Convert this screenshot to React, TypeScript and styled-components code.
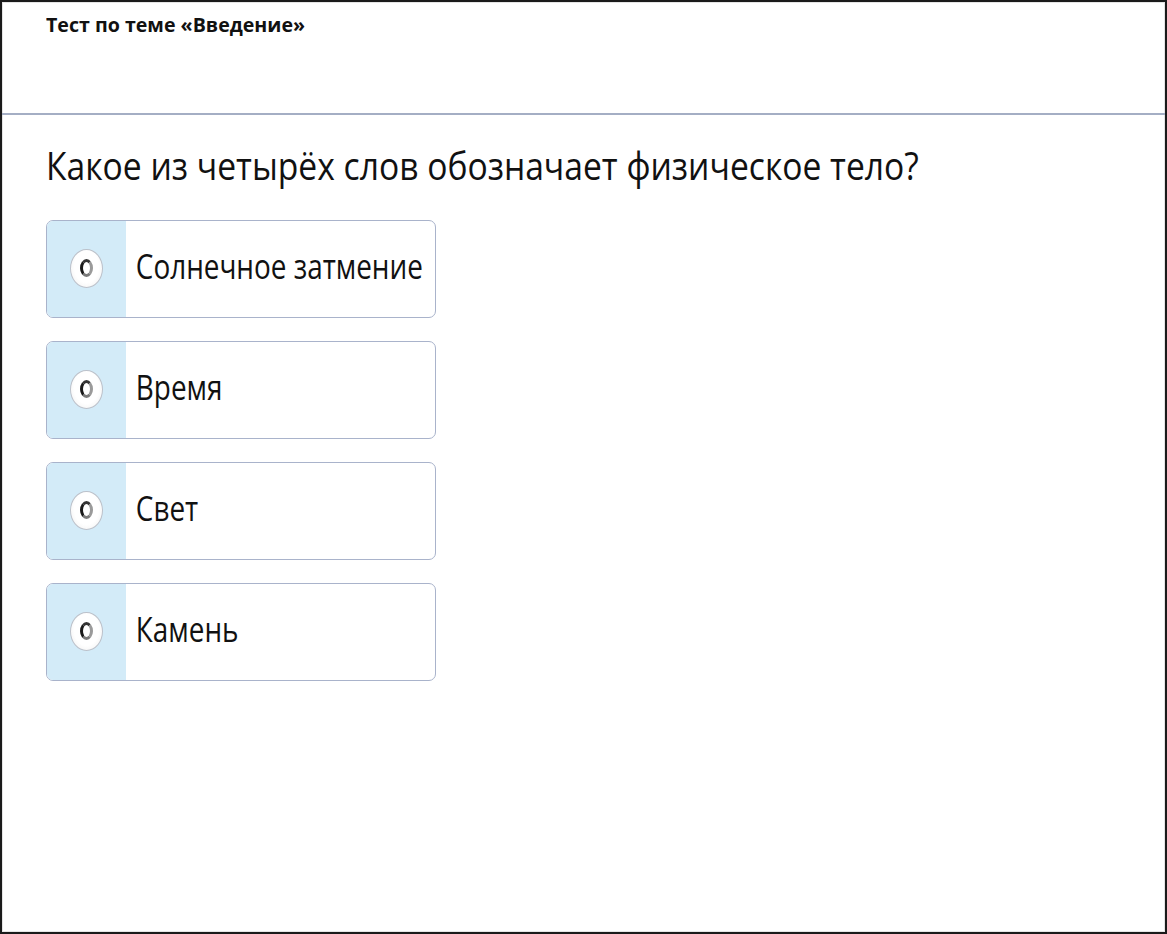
import React from 'react';
import styled, { createGlobalStyle } from 'styled-components';

const GlobalStyle = createGlobalStyle`
    html, body {
        margin: 0;
        padding: 0;
        background: #ffffff;
    }
    body {
        font-family: 'Open Sans', 'Noto Sans', sans-serif;
        color: #111111;
    }
`;

const options = ['Солнечное затмение', 'Время', 'Свет', 'Камень'];

const Frame = styled.div`
    box-sizing: border-box;
    width: 1167px;
    height: 934px;
    border: 2px solid #1a1a1a;
    box-shadow: inset 0 0 0 1px #e4e4e4;
    display: flex;
    flex-direction: column;
    overflow: hidden;
`;

const Header = styled.header`
    height: 113px;
    border-bottom: 2px solid #a4aec4;
    padding: 9px 0 0 44px;
    box-sizing: border-box;
`;

const Title = styled.h1`
    margin: 0;
    font-size: 20px;
    font-weight: 700;
    display: inline-block;
    transform: scaleX(0.98);
    transform-origin: left center;
    white-space: nowrap;
`;

const Body = styled.main`
    padding: 21px 0 0 44px;
    display: flex;
    flex-direction: column;
`;

const Question = styled.h2`
    margin: 0 0 26px;
    font-size: 38px;
    font-weight: 400;
    line-height: 58px;
    white-space: nowrap;
    transform: scaleX(0.885);
    transform-origin: left center;
`;

const OptionList = styled.div`
    display: flex;
    flex-direction: column;
    gap: 23px;
`;

const OptionCard = styled.label`
    box-sizing: border-box;
    width: 390px;
    height: 98px;
    display: flex;
    border: 1px solid #a9b3cb;
    border-radius: 7px;
    overflow: hidden;
    background: #ffffff;
    cursor: pointer;
`;

const RadioCell = styled.div`
    width: 79px;
    flex-shrink: 0;
    background: #d3ebf8;
    display: flex;
    align-items: center;
    justify-content: center;
    padding-bottom: 2px;
    box-sizing: border-box;
`;

const Radio = styled.span`
    width: 33px;
    height: 39px;
    border-radius: 50%;
    background: radial-gradient(ellipse at 50% 45%, #ffffff 55%, #ececec 100%);
    border: 1.5px solid #bcc1ca;
    box-sizing: border-box;
    display: flex;
    align-items: center;
    justify-content: center;

    &::after {
        content: '';
        width: 7px;
        height: 12px;
        border-radius: 50%;
        border: 3px solid #5a5a5a;
        border-left-color: #1a1a1a;
        border-top-color: #333333;
        border-right-color: #9a9a9a;
        border-bottom-color: #7a7a7a;
    }
`;

const OptionText = styled.span`
    display: flex;
    align-items: center;
    padding-left: 12px;
    font-size: 34px;
    white-space: nowrap;
    transform: scaleX(0.82);
    transform-origin: left center;
    padding-bottom: 6px;
`;

export default function App() {
    return (
        <>
            <GlobalStyle />
            <Frame>
                <Header>
                    <Title>Тест по теме «Введение»</Title>
                </Header>
                <Body>
                    <Question>Какое из четырёх слов обозначает физическое тело?</Question>
                    <OptionList>
                        {options.map((o) => (
                            <OptionCard key={o}>
                                <RadioCell>
                                    <Radio />
                                </RadioCell>
                                <OptionText>{o}</OptionText>
                            </OptionCard>
                        ))}
                    </OptionList>
                </Body>
            </Frame>
        </>
    );
}
